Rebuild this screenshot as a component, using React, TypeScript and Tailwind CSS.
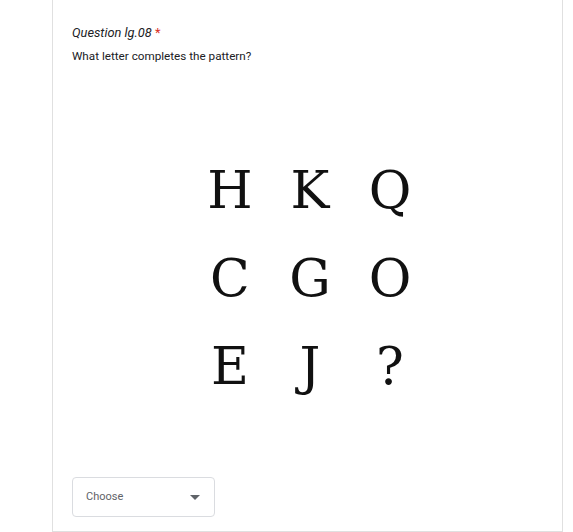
export default function App() {
  const rows = [
    ["H", "K", "Q"],
    ["C", "G", "O"],
    ["E", "J", "?"],
  ]

  return (
    <div className="h-[532px] w-[573px] overflow-hidden bg-white font-['Roboto',sans-serif]">
      <div className="ml-[52px] h-[532px] w-[511px] border-x border-b border-[#e0e0e0] bg-white px-[19px] pt-[26px]">
        <div className="text-[12.8px] italic leading-[14px] text-[#202124]">
          Question lg.08 <span className="not-italic text-[#d93025]">*</span>
        </div>
        <div className="mt-[9px] text-[11.7px] leading-[14px] text-[#202124]">What letter completes the pattern?</div>

        {/* puzzle grid */}
        <div className="mt-[83px] flex flex-col items-center pl-[5px] font-['DejaVu_Serif',serif] text-[52px] leading-[88px] text-[#111]">
          {rows.map((r, i) => (
            <div key={i} className="flex">
              {r.map((c) => (
                <span key={c} className="w-[80px] text-center">
                  {c}
                </span>
              ))}
            </div>
          ))}
        </div>

        <div className="mt-[67px] flex h-[40px] w-[143px] items-center justify-between rounded-[4px] border border-[#dadce0] pl-[13px] pr-[14px]">
          <span className="text-[11px] text-[#5f6368]">Choose</span>
          <svg width="10" height="5" viewBox="0 0 10 5">
            <path d="M0 0h10L5 5z" fill="#5f6368" />
          </svg>
        </div>
      </div>
    </div>
  )
}
